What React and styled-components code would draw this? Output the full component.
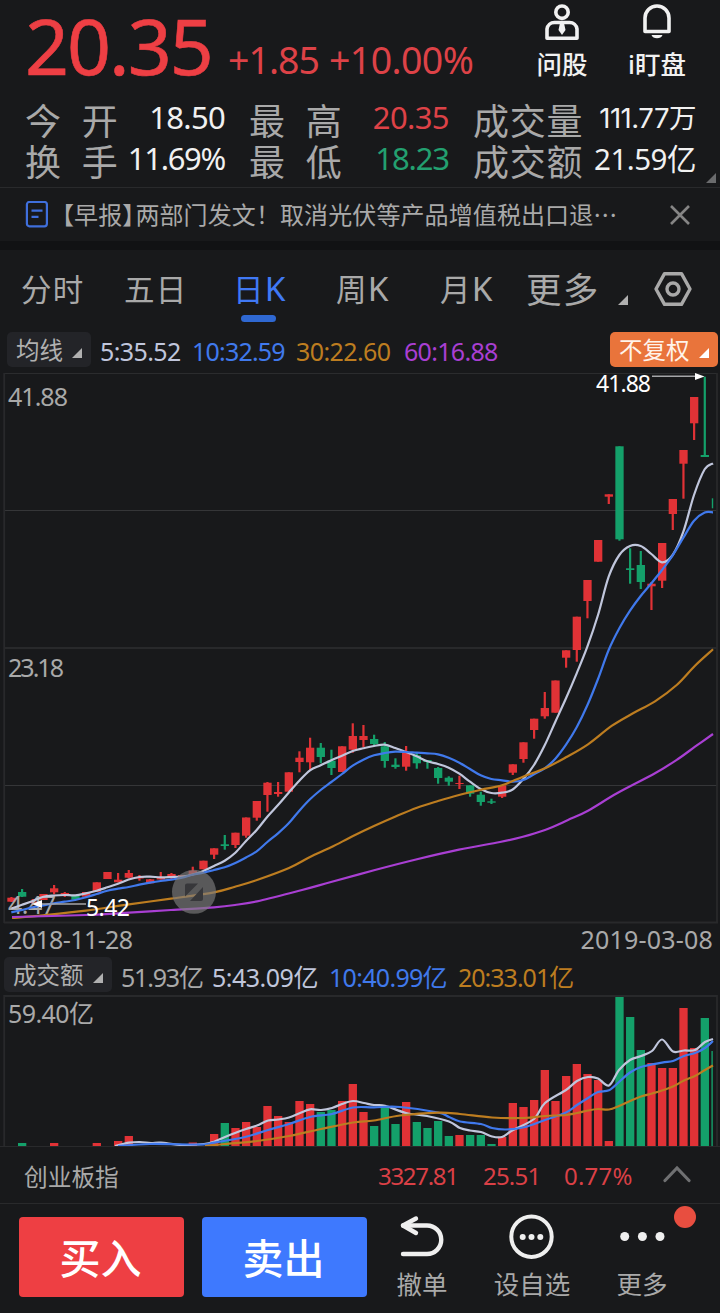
import styled, { createGlobalStyle } from 'styled-components'

const RED = '#e13236'
const GREEN = '#14a06a'
const WHITE_LINE = '#c0c6dc'
const BLUE = '#4079ec'
const ORANGE = '#bd7d20'
const PURPLE = '#a93fd3'

//DATA
const FIRST_X = 11.33
const STEP = 10.667
const xOf = (i) => FIRST_X + i * STEP

// [color, high, low, body top, body bottom]
const candles = [
  ['r', 897, 902, 897.7, 901.7],
  ['g', 889, 897, 892, 896.7],
  ['r', 899, 905, 901.5, 903],
  ['r', 894, 900, 894, 900],
  ['r', 885, 894.3, 888.3, 892.3],
  ['r', 892, 897, 893, 894.5],
  ['g', 896, 899.7, 896, 899.7],
  ['r', 892, 897, 892, 896.7],
  ['r', 882.3, 891.7, 882.3, 891.7],
  ['r', 872, 879, 872, 879],
  ['r', 873, 882.3, 879.7, 882.3],
  ['r', 870, 878.3, 873, 877.7],
  ['r', 875, 880.7, 877, 878.5],
  ['r', 879, 883.3, 879.3, 883.3],
  ['r', 872, 879.5, 877, 879.5],
  ['r', 873, 879.5, 874, 877],
  ['r', 875, 877, 875, 877],
  ['r', 866.7, 875, 870.7, 875],
  ['r', 860.7, 869.3, 860.7, 869.3],
  ['r', 848.3, 859, 848.3, 854.7],
  ['g', 835, 849.7, 844.3, 846],
  ['r', 832.7, 848, 832.7, 845],
  ['r', 817.5, 837.7, 817.5, 835.7],
  ['r', 801, 820.7, 801, 817.7],
  ['r', 782, 811.7, 782.7, 795],
  ['r', 782, 796.7, 792, 794],
  ['r', 772.3, 791.7, 772.3, 791.7],
  ['r', 751.3, 772.3, 757.7, 762],
  ['r', 737.7, 770, 747.7, 762.3],
  ['g', 743, 763.3, 747.7, 757],
  ['g', 749.7, 775, 760.7, 768],
  ['r', 746.3, 772, 746.3, 772],
  ['r', 723.3, 752.7, 736, 749.7],
  ['r', 725, 747.3, 736, 740],
  ['g', 734.7, 745.3, 739, 744],
  ['g', 742, 767.7, 746.3, 761],
  ['g', 758.3, 768.7, 764.7, 767],
  ['r', 746, 770.7, 752.3, 766.7],
  ['g', 753, 768.7, 755.3, 763.3],
  ['g', 760, 768.7, 760, 762],
  ['g', 767, 783.7, 768, 778],
  ['g', 776.3, 785.7, 777.7, 781.7],
  ['r', 775.7, 789, 783, 784],
  ['g', 785.3, 796.7, 785.3, 793.7],
  ['g', 791.7, 805.7, 794.7, 802],
  ['g', 798.7, 804, 801.3, 802.7],
  ['r', 785.3, 798, 785.3, 796.7],
  ['r', 764.3, 775, 764.3, 772.7],
  ['r', 742.3, 762.7, 742.3, 759],
  ['r', 718.7, 738.7, 718.7, 730],
  ['r', 692, 718.7, 708, 716.3],
  ['r', 680.5, 712.7, 680.5, 712.7],
  ['r', 650.3, 667.7, 650.3, 657.7],
  ['r', 616.7, 661.7, 616.7, 650],
  ['r', 580, 618.3, 580, 601],
  ['r', 540, 561.7, 540, 561.7],
  ['r', 494.3, 504, 494.3, 496.7],
  ['g', 446.3, 540.7, 446.3, 539.3],
  ['g', 548.3, 583.7, 568.3, 570],
  ['g', 551, 589, 565, 582],
  ['r', 582, 610, 583.7, 586.3],
  ['r', 543, 588, 543, 580.7],
  ['r', 499, 530, 499, 514],
  ['r', 450, 498.7, 450, 463.7],
  ['r', 397, 440, 397, 423.3],
  ['g', 376.7, 456.7, 455, 457],
]

const ma5 = [
  908.5, 904.8, 901, 896.7, 895.5, 895, 895.3, 893.3, 890.7, 887.3, 883.7,
  879.5, 877, 876.7, 877.3, 877, 876.5, 874.5, 871, 866, 860.7, 852.7, 841,
  830, 816.7, 805, 792.7, 780.7, 770.3, 765.3, 760.3, 755.7, 751, 748.3, 746,
  744.7, 748, 752, 756.3, 761.3, 764, 767.7, 773.7, 781.7, 789, 793, 792.7,
  789.5, 779, 765, 745.3, 721.7, 698.3, 673.3, 646.7, 615, 576.7, 555, 546,
  546, 554, 562.3, 555, 531.7, 495, 469.3,
].map((y, i) => [xOf(i), y])

const ma10 = [
  912.3, 910, 907.3, 905.3, 903.3, 901.7, 900, 897.3, 894, 890.7, 888.7, 887,
  884.7, 882.7, 881, 879.7, 877.7, 874.7, 872.7, 870, 867.3, 863, 857.5, 851.3,
  842, 833.3, 823.3, 810.7, 799.3, 790, 782, 774, 765.7, 759.7, 755.3, 753,
  751.7, 752, 752.7, 753.3, 754.3, 757.7, 762.7, 769, 775.3, 779, 780.3, 781.7,
  780, 774.3, 768.3, 758.7, 744.7, 727.3, 705.3, 679, 650, 628.3, 610.7, 596,
  583.3, 570, 555.3, 537.7, 520.7, 512.5,
].map((y, i) => [xOf(i), y])

const ma30 = [
  [12, 918], [43, 915.3], [86, 910.7], [129, 904.3], [171, 898.7],
  [214, 892.3], [235, 886.7], [257, 880], [289, 868], [310, 857],
  [331, 847.3], [353, 836], [374, 826], [395, 816.7], [417, 807.7],
  [438, 801], [459, 795], [481, 789.7], [502, 785.3], [523, 776.7],
  [545, 768.3], [566, 757.3], [588, 744.3], [612, 725.7], [633, 713.3],
  [655, 701.3], [677, 684.7], [695, 665.7], [713, 649.3],
]

const ma60 = [
  [12, 917], [86, 915], [129, 912.7], [171, 910], [214, 907.3], [235, 905],
  [260, 900.7], [302, 890], [331, 882], [374, 870.3], [417, 859.3],
  [459, 849.7], [500, 842], [522, 837], [545, 830], [568, 820], [588, 810.7],
  [617, 793.3], [655, 773.3], [678, 759], [695, 746.7], [713, 734],
]

// [candle index, color, top]
const volumes = [
  [1, 'g', 1143], [4, 'r', 1143], [8, 'r', 1143], [10, 'r', 1141],
  [11, 'r', 1136], [17, 'r', 1142.5], [19, 'r', 1134], [20, 'g', 1123],
  [21, 'r', 1128], [22, 'r', 1122], [23, 'r', 1127], [24, 'r', 1106],
  [25, 'r', 1116], [26, 'r', 1122], [27, 'r', 1101], [28, 'r', 1104],
  [29, 'g', 1112], [30, 'g', 1110], [31, 'r', 1101], [32, 'r', 1084],
  [33, 'r', 1112], [34, 'g', 1126], [35, 'g', 1107], [36, 'g', 1124],
  [37, 'r', 1102], [38, 'g', 1122], [39, 'g', 1128], [40, 'g', 1121],
  [41, 'g', 1136], [42, 'r', 1135], [43, 'g', 1135], [44, 'g', 1135],
  [45, 'g', 1144], [46, 'r', 1137], [47, 'r', 1103], [48, 'r', 1107],
  [49, 'r', 1100], [50, 'r', 1070], [51, 'r', 1101], [52, 'r', 1076],
  [53, 'r', 1064], [54, 'r', 1074], [55, 'r', 1080], [56, 'r', 1141],
  [57, 'g', 997], [58, 'g', 1017], [59, 'g', 1050], [60, 'r', 1063],
  [61, 'r', 1068], [62, 'r', 1068], [63, 'r', 1008], [64, 'r', 1048],
  [65, 'g', 1018],
]

const vol5 = [
  [115, 1146], [129, 1142.7], [140, 1142], [151, 1143], [161, 1142.7],
  [182, 1145], [204, 1144], [214, 1141.7], [225, 1137], [235, 1133],
  [246, 1129], [257, 1125.5], [268, 1120.5], [278, 1119.5], [289, 1117.5],
  [300, 1113], [310, 1109.3], [321, 1110], [332, 1108], [342, 1104],
  [353, 1101], [364, 1103], [374, 1105], [385, 1105.7], [406, 1113],
  [427, 1116], [449, 1121.5], [460, 1128], [470, 1130.5], [481, 1132],
  [492, 1136.5], [502, 1137], [513, 1130], [534, 1119], [545, 1103],
  [566, 1090], [577, 1081], [588, 1077], [598, 1078.5], [609, 1085.5],
  [619, 1070], [630, 1060], [641, 1056], [652, 1051], [662, 1039.5],
  [673, 1051.5], [684, 1050.5], [695, 1050], [705, 1042], [713, 1039],
]

const vol10 = [
  [118, 1146], [150, 1144], [200, 1144.5], [214, 1142.7], [246, 1136.7],
  [268, 1130], [289, 1124], [310, 1117], [332, 1114], [353, 1107.5],
  [374, 1107.3], [400, 1107], [438, 1112.5], [449, 1117], [460, 1121.5],
  [481, 1124], [492, 1128], [506, 1129.5], [524, 1127.3], [545, 1120],
  [566, 1112.5], [577, 1105], [588, 1098], [598, 1092], [609, 1090.3],
  [619, 1082], [630, 1072.5], [641, 1067], [662, 1062.7], [673, 1061],
  [684, 1056], [695, 1053], [705, 1048], [713, 1041],
]

const vol20 = [
  [205, 1146], [225, 1144], [257, 1141], [289, 1136], [321, 1129],
  [353, 1122.5], [374, 1120.5], [400, 1115.5], [438, 1112.7], [460, 1114],
  [492, 1117.5], [524, 1118], [545, 1116], [566, 1115], [577, 1113],
  [588, 1110.5], [598, 1109], [609, 1109.5], [619, 1106], [630, 1101],
  [641, 1096.5], [652, 1093.5], [662, 1090.5], [673, 1086.5], [684, 1080.5],
  [695, 1076], [705, 1070], [713, 1065.5],
]

// smooth path through every point
const curve = (pts) => {
  let d = `M${pts[0][0]} ${pts[0][1]}`
  for (let i = 0; i < pts.length - 1; i++) {
    const p0 = pts[i - 1] || pts[i]
    const p1 = pts[i]
    const p2 = pts[i + 1]
    const p3 = pts[i + 2] || p2
    d += ` C${p1[0] + (p2[0] - p0[0]) / 6} ${p1[1] + (p2[1] - p0[1]) / 6}`
    d += ` ${p2[0] - (p3[0] - p1[0]) / 6} ${p2[1] - (p3[1] - p1[1]) / 6}`
    d += ` ${p2[0]} ${p2[1]}`
  }
  return d
}

//STYLES
const GlobalStyle = createGlobalStyle`
  * {
    box-sizing: border-box;
  }
  body {
    margin: 0;
    background: #18191b;
    font-family: 'Noto Sans', 'Noto Sans CJK SC', sans-serif;
    color: #a9a9a9;
  }
`

const Page = styled.main`
  width: 720px;
  height: 1313px;
  overflow: hidden;
  display: flex;
  flex-direction: column;
  background: #18191b;
`

const Num = styled.span`
  font-size: ${(p) => p.$size || 25}px;
  letter-spacing: ${(p) => p.$track || 0}px;
  color: ${(p) => p.$color || 'inherit'};
  white-space: nowrap;
`

const Triangle = styled.i`
  flex: none;
  width: 10px;
  height: 10px;
  background: ${(p) => p.$color || '#b0b0b0'};
  clip-path: polygon(100% 0, 100% 100%, 0 100%);
`

const Header = styled.header`
  position: relative;
  height: 188px;
  border-bottom: 1px solid #292a2c;
`
const Summary = styled.div`
  display: grid;
  grid-template-columns: 203px 101px 202px 62px 1fr;
  height: 97px;
  padding-left: 25px;
`
const Price = styled(Num)`
  line-height: 92px;
  -webkit-text-stroke: 0.6px currentColor;
`
const Change = styled(Num)`
  line-height: 119px;
`
const HeadAction = styled.button`
  display: flex;
  flex-direction: column;
  align-items: center;
  padding: 3px 0 0;
  border: 0;
  background: none;
  color: #f1f1f1;
  font: 500 25.5px/36px 'Noto Sans', 'Noto Sans CJK SC', sans-serif;
  width: ${(p) => p.$width}px;
  margin-left: ${(p) => p.$left || 0}px;
  white-space: nowrap;
  svg {
    margin-bottom: 3px;
  }
`
const Quotes = styled.dl`
  display: grid;
  grid-template-columns: 100px 100px 24px 100px 100px 24px 110px 113px;
  grid-auto-rows: 41px;
  margin: 0;
  padding-left: 25px;
`
const Label = styled.dt`
  height: 41px;
  font-size: 36px;
  line-height: 50px;
  letter-spacing: ${(p) => (p.$wide ? 0 : 0.7)}px;
  word-spacing: ${(p) => (p.$wide ? 11.5 : 0)}px;
  white-space: nowrap;
  grid-column: ${(p) => p.$col};
`
const Value = styled.dd`
  display: flex;
  justify-content: flex-end;
  margin: 0;
  line-height: 41px;
  color: #f1f1f1;
`
const Volume = styled(Num)`
  font-family: Inter, 'Noto Sans CJK SC', sans-serif;
  line-height: 43px;
`
const Corner = styled(Triangle)`
  position: absolute;
  right: 4px;
  bottom: 4px;
`

const News = styled.section`
  display: flex;
  align-items: center;
  height: 53px;
  padding: 0 30px 0 25px;
  font: 24px/53px 'Noto Sans CJK SC', sans-serif;
  letter-spacing: 0.1px;
`
const Tag = styled.span`
  margin-right: -11px;
`
const Headline = styled.p`
  flex: 1;
  margin: -3px 0 0 1px;
  white-space: nowrap;
`
const Gap = styled.div`
  height: 9px;
  background: #111214;
`

const Tabs = styled.nav`
  display: grid;
  grid-template-columns: 103px 109px 103px 104px 86px 91px 37px 38px;
  justify-content: start;
  height: 80px;
  padding: 16px 0 0 21px;
`
const Tab = styled.a`
  display: flex;
  flex-direction: column;
  height: 56px;
  font-size: ${(p) => p.$size || 30.5}px;
  line-height: 46px;
  letter-spacing: 1.2px;
  white-space: nowrap;
  color: ${(p) => (p.$active ? '#4079f5' : '#a9a9a9')};
  &::after {
    content: '';
    width: 35px;
    height: 7px;
    margin: 3px 0 0 8px;
    border-radius: 4px;
    background: ${(p) => (p.$active ? '#2f68d2' : 'transparent')};
  }
`
const Letter = styled.span`
  font-size: 33.5px;
  line-height: 1;
`
const TabArrow = styled(Triangle)`
  margin: 29px 0 0 1px;
`
const Settings = styled.svg`
  margin-top: 5px;
`

const Legend = styled.div`
  display: grid;
  grid-template-columns: ${(p) => p.$columns};
  align-items: center;
  height: ${(p) => p.$height}px;
  padding-left: ${(p) => p.$left}px;
  > ${Num} {
    padding: 2px 0 0 9px;
  }
`
const Chip = styled.button`
  display: flex;
  align-items: center;
  justify-content: space-between;
  height: 35px;
  margin-top: -1px;
  padding: 0 9px;
  border: 0;
  border-radius: 5px;
  background: ${(p) => (p.$accent ? '#e9743b' : '#232428')};
  color: ${(p) => (p.$accent ? '#fff3ea' : '#b0b0b0')};
  font: 23.5px/34px 'Noto Sans', 'Noto Sans CJK SC', sans-serif;
  white-space: nowrap;
  ${Triangle} {
    margin-top: 7px;
  }
`

const Chart = styled.svg`
  display: block;
  flex: none;
  font-size: 25px;
`
const Dates = styled.div`
  display: flex;
  justify-content: space-between;
  height: 31px;
  padding: 0 7px 0 8px;
  line-height: 29px;
`

const IndexBar = styled.section`
  display: grid;
  grid-template-columns: 354px 105px 81px 99px 1fr;
  align-items: center;
  height: 57px;
  padding: 1px 0 0 24px;
  border-bottom: 1px solid #292a2c;
  color: #da4046;
  svg {
    margin-bottom: 4px;
  }
`
const IndexName = styled.span`
  font-size: 23.7px;
  color: #a9a9a9;
`

const ActionBar = styled.footer`
  display: flex;
  height: 109px;
  padding: 13px 0 0 19px;
`
const Trade = styled.button`
  width: 165px;
  height: 80px;
  margin-right: 18px;
  padding: 2px 2px 0 0;
  border: 0;
  border-radius: 4px;
  background: ${(p) => p.$color};
  color: #fff;
  font: 500 41px/78px 'Noto Sans', 'Noto Sans CJK SC', sans-serif;
`
const Action = styled.button`
  position: relative;
  display: flex;
  flex-direction: column;
  align-items: center;
  width: ${(p) => p.$width}px;
  padding: 0;
  border: 0;
  background: none;
  color: #a9a9a9;
  font: 25.5px/38px 'Noto Sans', 'Noto Sans CJK SC', sans-serif;
  svg {
    margin: -4px 0 2px;
  }
`
const Dot = styled.i`
  position: absolute;
  top: -11px;
  left: 69px;
  width: 22px;
  height: 22px;
  border-radius: 50%;
  background: #e84e40;
`

const tone = (c) => (c === 'r' ? RED : GREEN)

function Line({ points, color }) {
  return (
    <path d={curve(points)} fill="none" stroke={color} strokeWidth="2.2" />
  )
}

function PriceChart() {
  return (
    <Chart width="720" height="555" viewBox="0 370 720 555">
      <g fill="none" stroke="#2b2c2e">
        <path d="M4 373.5H717" />
        <path d="M5 510.5H717M5 785.5H717" stroke="#353638" />
        <path d="M5 648H717M4 922.5H718" strokeWidth="2" stroke="#28292b" />
        <path d="M4.2 373V923M717 373V923" strokeWidth="1.8" stroke="#28292b" />
      </g>
      {candles.map(([c, high, low, top, bottom], i) => (
        <g key={i} fill={tone(c)}>
          <rect x={xOf(i) - 1} y={high} width="2.2" height={low - high} />
          <rect x={xOf(i) - 4} y={top} width="8.3" height={bottom - top} />
        </g>
      ))}
      <rect x="711.8" y="498.3" width="1.4" height="10" fill={GREEN} />
      <g fill="#a9a9a9">
        <text x="8" y="405.7" textLength="60">41.88</text>
        <text x="8" y="676.5" textLength="56">23.18</text>
        <text x="8" y="913.7" textLength="48">4.47</text>
      </g>
      <Line points={[...ma5, [713, 463.3]]} color={WHITE_LINE} />
      <Line points={[...ma10, [713, 512.3]]} color={BLUE} />
      <Line points={ma30} color={ORANGE} />
      <Line points={ma60} color={PURPLE} />
      <path d="M652 376.3H696M86 904H41" stroke="#a4a5a8" strokeWidth="1.6" />
      <path d="M695 373L704.5 376.4L695 380ZM42 900L32 904L42 908Z" fill="#fff" />
      <g fill="#fff" fontSize="23">
        <text x="596" y="392.2" textLength="55">41.88</text>
        <text x="86" y="916.2" textLength="44">5.42</text>
      </g>
      <circle cx="194" cy="891.8" r="22" fill="#7c7c7c" opacity=".65" />
      <path
        d="M187 883.5H198L185 896.5V885.5A2 2 0 0 1 187 883.5ZM203 887V899A2 2 0 0 1 201 901H190Z"
        fill="#37373a"
      />
    </Chart>
  )
}

function VolumeChart() {
  return (
    <Chart width="720" height="154" viewBox="0 993 720 154">
      <path
        d="M4.2 1146V996H717V1146"
        fill="none"
        stroke="#28292b"
        strokeWidth="1.8"
      />
      <text x="8" y="1023" textLength="86" fill="#a9a9a9">59.40亿</text>
      {volumes.map(([i, c, top]) => (
        <rect
          key={i}
          x={xOf(i) - 4}
          y={top}
          width="8.3"
          height={1146 - top}
          fill={tone(c)}
        />
      ))}
      <rect x="711.4" y="1051" width="1.4" height="95" fill={GREEN} />
      <Line points={vol5} color={WHITE_LINE} />
      <Line points={vol10} color={BLUE} />
      <Line points={vol20} color={ORANGE} />
      <path d="M0 1146.5H720" stroke="#292a2c" />
    </Chart>
  )
}

function App() {
  return (
    <Page>
      <GlobalStyle />
      <Header>
        <Summary>
          <Price $size={77} $track={-2} $color="#ee3f44">20.35</Price>
          <Change $size={37.5} $track={-1} $color="#dd4247">+1.85</Change>
          <Change $size={37.5} $track={-0.6} $color="#dd4247">+10.00%</Change>
          <HeadAction $width={62}>
            <svg width="36" height="40" fill="none" stroke="#f1f1f1" strokeWidth="3.6">
              <circle cx="18" cy="9.2" r="6.2" />
              <path d="M3 35.2V26A7.5 7.5 0 0 1 10.5 19.5H25.5A7.5 7.5 0 0 1 33 26V35.2Z" strokeLinejoin="round" />
              <path d="M16 20H20L21.5 27L18 32L14.5 27Z" fill="#f1f1f1" stroke="none" />
            </svg>
            问股
          </HeadAction>
          <HeadAction $width={70} $left={29}>
            <svg width="32" height="40" fill="none" stroke="#f1f1f1" strokeWidth="3.6">
              <path d="M4 28.5V15A12 12 0 0 1 28 15V28.5Z" strokeLinejoin="round" />
              <path d="M10.5 32H21.5A5.8 4.8 0 0 1 10.5 32Z" fill="#f1f1f1" stroke="none" />
            </svg>
            i盯盘
          </HeadAction>
        </Summary>
        <Quotes>
          <Label $wide>今 开</Label>
          <Value><Num $size={31} $track={-0.7}>18.50</Num></Value>
          <Label $wide $col={4}>最 高</Label>
          <Value><Num $size={31} $track={-0.6} $color="#dd4247">20.35</Num></Value>
          <Label $col={7}>成交量</Label>
          <Value><Volume $size={27.5} $track={-0.5}>111.77万</Volume></Value>
          <Label $wide>换 手</Label>
          <Value><Num $size={31} $track={-1.3}>11.69%</Num></Value>
          <Label $wide $col={4}>最 低</Label>
          <Value><Num $size={31} $track={-1.1} $color="#23a070">18.23</Num></Value>
          <Label $col={7}>成交额</Label>
          <Value><Num $size={29.5} $track={-0.5}>21.59亿</Num></Value>
        </Quotes>
        <Corner $color="#6a6b6d" />
      </Header>

      <News>
        <svg width="24" height="28" fill="none" stroke="#3f6fdc" strokeWidth="2.2">
          <rect x="1.9" y="1" width="20" height="24.3" rx="2.5" />
          <path d="M6.5 9.7H17.5M6.5 15.9H13.5" />
        </svg>
        <Headline>
          <Tag>【早报】</Tag>两部门发文！取消光伏等产品增值税出口退…
        </Headline>
        <svg width="20" height="20" stroke="#858585" strokeWidth="2.6">
          <path d="M1 1L19 19M19 1L1 19" />
        </svg>
      </News>
      <Gap />

      <Tabs>
        <Tab><span>分时</span></Tab>
        <Tab><span>五日</span></Tab>
        <Tab $active><span>日<Letter>K</Letter></span></Tab>
        <Tab><span>周<Letter>K</Letter></span></Tab>
        <Tab><span>月<Letter>K</Letter></span></Tab>
        <Tab $size={35.5}><span>更多</span></Tab>
        <TabArrow />
        <Settings width="38" height="36" fill="none" stroke="#a9a9a9" strokeWidth="3.4">
          <path d="M10.5 2.7H27.5L36 18L27.5 33.3H10.5L2 18Z" strokeLinejoin="round" />
          <circle cx="19" cy="18" r="6" />
        </Settings>
      </Tabs>

      <Legend $height={40} $left={7} $columns="84px 92px 104px 108px 215px 108px">
        <Chip>均线<Triangle /></Chip>
        <Num $track={-0.6} $color={WHITE_LINE}>5:35.52</Num>
        <Num $track={-0.8} $color={BLUE}>10:32.59</Num>
        <Num $track={-0.6} $color={ORANGE}>30:22.60</Num>
        <Num $track={-0.7} $color={PURPLE}>60:16.88</Num>
        <Chip $accent>不复权<Triangle $color="#fff" /></Chip>
      </Legend>
      <PriceChart />
      <Dates>
        <Num $track={-0.6}>2018-11-28</Num>
        <Num $track={0.2}>2019-03-08</Num>
      </Dates>

      <Legend $height={37} $left={4} $columns="108px 91px 117px 129px 200px">
        <Chip>成交额<Triangle /></Chip>
        <Num $track={-1.2}>51.93亿</Num>
        <Num $track={-0.5} $color={WHITE_LINE}>5:43.09亿</Num>
        <Num $track={-0.7} $color={BLUE}>10:40.99亿</Num>
        <Num $track={-1} $color={ORANGE}>20:33.01亿</Num>
      </Legend>
      <VolumeChart />

      <IndexBar>
        <IndexName>创业板指</IndexName>
        <Num $size={24} $track={-1.3}>3327.81</Num>
        <Num $size={24} $track={-0.8}>25.51</Num>
        <Num $size={24} $track={0.2}>0.77%</Num>
        <svg width="28" height="18" fill="none" stroke="#6f7072" strokeWidth="3.2">
          <path d="M2 15.5L14 3L26 15.5" strokeLinecap="round" />
        </svg>
      </IndexBar>

      <ActionBar>
        <Trade $color="#ee3f43">买入</Trade>
        <Trade $color="#3e79fe">卖出</Trade>
        <Action $width={74}>
          <svg width="46" height="50" fill="none" stroke="#efefef" strokeWidth="4.4" strokeLinecap="round">
            <path d="M4 12.5H28A14.2 14.2 0 0 1 28 41H4" />
            <path d="M17 5.5L4 12.5L17 20" strokeLinejoin="round" />
          </svg>
          撤单
        </Action>
        <Action $width={146}>
          <svg width="50" height="50" fill="none" stroke="#efefef" strokeWidth="4">
            <circle cx="24.5" cy="23.7" r="20.2" />
            <g fill="#efefef" stroke="none">
              <circle cx="15.7" cy="23.9" r="3" />
              <circle cx="24.5" cy="23.9" r="3" />
              <circle cx="33.3" cy="23.9" r="3" />
            </g>
          </svg>
          设自选
        </Action>
        <Action $width={74}>
          <svg width="50" height="50" fill="#efefef">
            <circle cx="7.7" cy="23.5" r="4.5" />
            <circle cx="25.4" cy="23.5" r="4.5" />
            <circle cx="43" cy="23.5" r="4.5" />
          </svg>
          更多
          <Dot />
        </Action>
      </ActionBar>
    </Page>
  )
}

export default App
